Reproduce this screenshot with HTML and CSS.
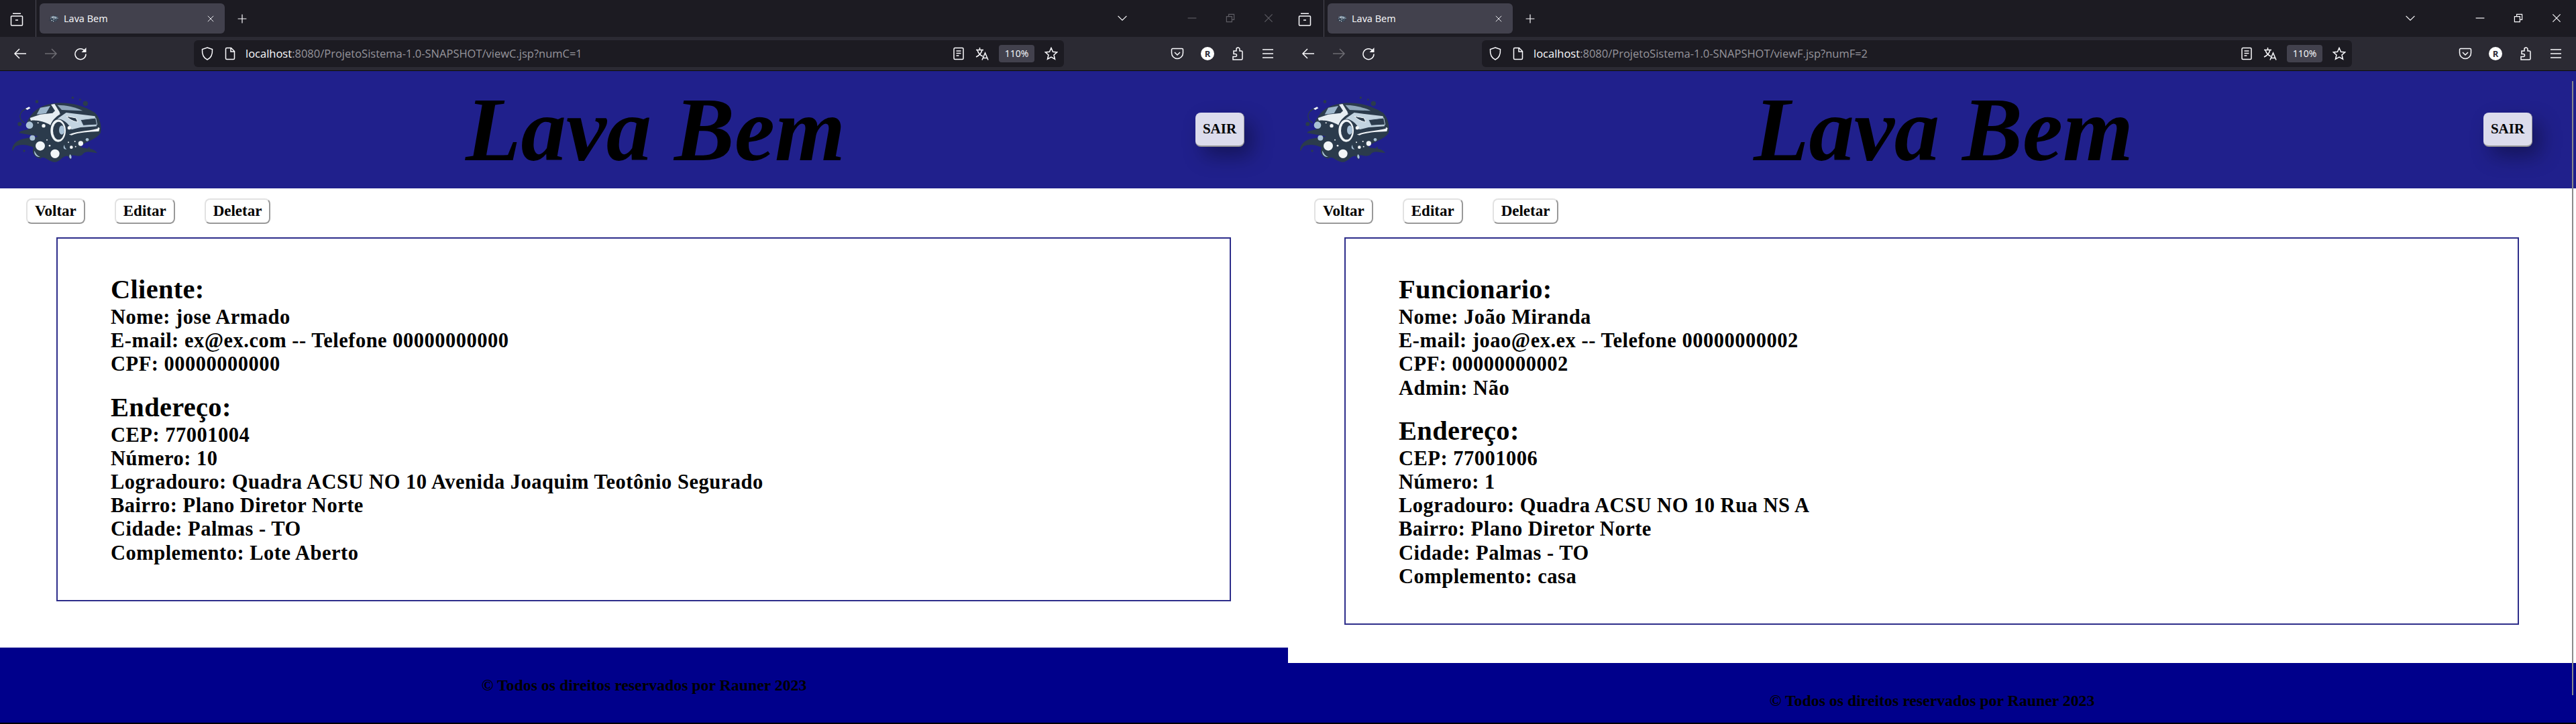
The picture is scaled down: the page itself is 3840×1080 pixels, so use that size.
FILE: index.html
```html
<!DOCTYPE html>
<html lang="pt-BR">
<head>
    <meta charset="UTF-8">
    <title>Lava Bem</title>
    <link rel="stylesheet" href="styles.css">
</head>
<body>
    <svg class="sprites" xmlns="http://www.w3.org/2000/svg">
        <symbol id="logo" viewBox="0 0 450 330">
            <path fill="#2b3b4c" d="M100 110C120 75 150 50 215 42C280 36 340 50 395 85C420 110 425 150 420 175C400 205 350 215 330 235C340 250 385 235 405 265C380 262 360 255 345 265C330 290 300 270 290 275L285 297L275 280C250 270 240 310 210 305C180 300 170 275 150 290C125 285 110 265 120 240C90 225 60 225 40 235C30 245 30 255 25 255C20 235 40 205 80 200C110 195 130 195 140 190C110 185 80 180 55 175C60 160 90 165 100 155C85 140 90 120 100 110Z"/>
            <path fill="none" stroke="#2b3b4c" stroke-width="4" d="M90 66C65 72 55 95 62 112C66 122 72 126 80 130"/>
            <path fill="#eef3f6" d="M84 66L100 58L106 64L92 72Z"/>
            <g fill="#2b3b4c">
                <circle cx="135" cy="35" r="7"/><circle cx="352" cy="43" r="11"/><circle cx="295" cy="17" r="5"/><circle cx="328" cy="26" r="4"/>
                <circle cx="58" cy="135" r="9"/><circle cx="78" cy="255" r="5"/><circle cx="368" cy="242" r="4"/>
            </g>
            <path fill="#e6edf2" d="M104 108L150 92L205 86L222 70L240 90C215 105 200 125 196 140C170 125 135 115 108 120Z"/>
            <path fill="#9db6cb" d="M150 62L195 54L176 87L134 92Z"/>
            <path fill="#e8eef3" d="M198 48L214 45L238 84L224 88Z"/>
            <path fill="#8fa6ba" d="M226 50C265 50 310 60 340 76L246 72Z"/>
            <path fill="#c3d4e1" d="M226 112L266 84L395 100L402 145L330 150L290 160C275 130 250 112 226 112Z"/>
            <path fill="#2b3b4c" stroke="#f2f6f8" stroke-width="3" d="M268 100L310 108L318 126C300 124 280 115 268 100Z"/>
            <path fill="#2b3b4c" stroke="#b4c8d8" stroke-width="3" d="M330 116L398 108L404 138L342 142Z"/>
            <path fill="#f0f4f7" d="M278 182C320 164 380 166 416 152L412 168C370 170 320 172 290 185Z"/>
            <ellipse cx="230" cy="165" rx="34" ry="50" fill="#eef3f6"/>
            <ellipse cx="232" cy="165" rx="25" ry="40" fill="#2b3b4c"/>
            <ellipse cx="246" cy="162" rx="12" ry="20" fill="#a9c1d6"/>
            <g fill="#a9c1d6">
                <circle cx="102" cy="140" r="16"/><circle cx="115" cy="197" r="12"/><circle cx="360" cy="205" r="7"/>
            </g>
            <g fill="#f2f6f8">
                <circle cx="150" cy="233" r="21"/><circle cx="216" cy="268" r="20"/><circle cx="331" cy="222" r="11"/><circle cx="289" cy="239" r="7"/>
                <circle cx="165" cy="143" r="8"/><circle cx="280" cy="152" r="8"/><circle cx="128" cy="115" r="3"/><circle cx="140" cy="130" r="3"/><circle cx="192" cy="232" r="4"/>
                <circle cx="180" cy="206" r="3"/><circle cx="276" cy="217" r="3"/><circle cx="308" cy="236" r="3"/><circle cx="305" cy="213" r="3"/><circle cx="410" cy="153" r="3"/>
            </g>
            <path fill="#a9c1d6" d="M124 254C120 272 135 284 150 282C138 278 130 268 124 254ZM258 228C250 240 255 250 268 248C262 244 258 238 258 228ZM283 270C276 280 282 292 288 290C292 284 290 276 283 270Z"/>
        </symbol>
        <symbol id="i-view" viewBox="0 0 20 20"><path d="M4 1.2H16M2.5 5H17.5A1 1 0 0 1 18.5 6V18A1 1 0 0 1 17.5 19H2.5A1 1 0 0 1 1.500 18V6A1 1 0 0 1 2.500 5ZM8 11H12"/></symbol>
        <symbol id="i-close" viewBox="0 0 20 20"><path d="M3 3L17 17M17 3L3 17"/></symbol>
        <symbol id="i-plus" viewBox="0 0 20 20"><path d="M10 2V18M2 10H18"/></symbol>
        <symbol id="i-chevron" viewBox="0 0 20 20"><path d="M2 6L10 14L18 6"/></symbol>
        <symbol id="i-min" viewBox="0 0 20 20"><path d="M2 10H18"/></symbol>
        <symbol id="i-restore" viewBox="0 0 20 20"><path d="M3 7H13V17H3ZM7 7V3H17V13H13"/></symbol>
        <symbol id="i-back" viewBox="0 0 20 20"><path d="M19 10H2M9 3L2 10L9 17"/></symbol>
        <symbol id="i-forward" viewBox="0 0 20 20"><path d="M1 10H18M11 3L18 10L11 17"/></symbol>
        <symbol id="i-reload" viewBox="0 0 20 20"><path d="M16.500 6A8 8 0 1 0 18 10.500"/><path class="solid" d="M18.500 1V8H11.500Z"/></symbol>
        <symbol id="i-shield" viewBox="0 0 20 20"><path d="M10 1L17.500 3.500C18 11 15.500 16.500 10 19C4.500 16.500 2 11 2.500 3.500Z"/></symbol>
        <symbol id="i-page" viewBox="0 0 20 20"><path d="M5 1.500H11.500L16.500 6.500V17A1.500 1.500 0 0 1 15 18.500H5A1.500 1.500 0 0 1 3.500 17V3A1.500 1.500 0 0 1 5 1.500ZM11 2V7H16"/></symbol>
        <symbol id="i-reader" viewBox="0 0 20 20"><path d="M4.500 1.500H15.500A1.500 1.500 0 0 1 17 3V17A1.500 1.500 0 0 1 15.500 18.500H4.500A1.500 1.500 0 0 1 3 17V3A1.500 1.500 0 0 1 4.500 1.500ZM6.500 6H13.500M6.500 9.500H13.500M6.500 13H10.500"/></symbol>
        <symbol id="i-translate" viewBox="0 0 20 20"><path d="M1 4.500H12M6.500 1V4.500M3 4.500C4 9 7.500 12.500 11 14M10 4.500C9 9 5.500 13 1 15M10 19.500L14.500 9L19 19.500M11.500 16.500H17.500"/></symbol>
        <symbol id="i-star" viewBox="0 0 20 20"><path d="M10 1.500L12.500 7.300L18.800 7.900L14 12L15.500 18.200L10 15L4.500 18.200L6 12L1.200 7.900L7.500 7.300Z"/></symbol>
        <symbol id="i-pocket" viewBox="0 0 20 20"><path d="M3 2.500H17A1.500 1.500 0 0 1 18.500 4V9A8.500 8.500 0 0 1 1.500 9V4A1.500 1.500 0 0 1 3 2.500ZM6 8L10 12L14 8"/></symbol>
        <symbol id="i-puzzle" viewBox="0 0 20 20"><path d="M3 19H15.500A1.500 1.500 0 0 0 17 17.500V7.500A1.500 1.500 0 0 0 15.500 6H13V3.500A2.500 2.500 0 0 0 8 3.500V6H4V10.500H6.500A2 2 0 0 1 6.500 14.500H3Z"/></symbol>
        <symbol id="i-menu" viewBox="0 0 20 20"><path d="M2 4H18M2 10H18M2 16H18"/></symbol>
    </svg>

    <div class="desktop">
        <div class="window window-back">
            <div class="tabbar">
                <svg class="icon icon-view"><use href="#i-view"/></svg>
                <div class="tab">
                    <svg class="favicon"><use href="#logo"/></svg>
                    <span class="tab-title">Lava Bem</span>
                    <svg class="icon-small"><use href="#i-close"/></svg>
                </div>
                <svg class="icon-small icon-plus"><use href="#i-plus"/></svg>
                <svg class="icon-small icon-chevron"><use href="#i-chevron"/></svg>
                <div class="caption">
                    <svg class="icon-small"><use href="#i-min"/></svg>
                    <svg class="icon-small"><use href="#i-restore"/></svg>
                    <svg class="icon-small"><use href="#i-close"/></svg>
                </div>
            </div>
            <div class="toolbar">
                <svg class="icon"><use href="#i-back"/></svg>
                <svg class="icon dim"><use href="#i-forward"/></svg>
                <svg class="icon"><use href="#i-reload"/></svg>
                <div class="urlbar">
                    <svg class="icon"><use href="#i-shield"/></svg>
                    <svg class="icon"><use href="#i-page"/></svg>
                    <div class="url"><b>localhost</b>:8080/ProjetoSistema-1.0-SNAPSHOT/viewC.jsp?numC=1</div>
                    <svg class="icon"><use href="#i-reader"/></svg>
                    <svg class="icon"><use href="#i-translate"/></svg>
                    <span class="zoom">110%</span>
                    <svg class="icon"><use href="#i-star"/></svg>
                </div>
                <div class="tools">
                    <svg class="icon"><use href="#i-pocket"/></svg>
                    <span class="avatar">R</span>
                    <svg class="icon"><use href="#i-puzzle"/></svg>
                    <svg class="icon"><use href="#i-menu"/></svg>
                </div>
            </div>
            <div class="page">
                <header class="topo">
                    <div class="logo"><svg><use href="#logo"/></svg></div>
                    <h1>Lava Bem</h1>
                    <button class="btn-sair">SAIR</button>
                </header>
                <div class="acoes">
                    <button class="btn">Voltar</button>
                    <button class="btn">Editar</button>
                    <button class="btn">Deletar</button>
                </div>
                <main class="ficha">
                    <h2>Cliente:</h2>
                    <p>Nome: jose Armado</p>
                    <p>E-mail: ex@ex.com -- Telefone 00000000000</p>
                    <p>CPF: 00000000000</p>
                    <h2 class="endereco">Endereço:</h2>
                    <p>CEP: 77001004</p>
                    <p>Número: 10</p>
                    <p>Logradouro: Quadra ACSU NO 10 Avenida Joaquim Teotônio Segurado</p>
                    <p>Bairro: Plano Diretor Norte</p>
                    <p>Cidade: Palmas - TO</p>
                    <p>Complemento: Lote Aberto</p>
                </main>
                <footer class="rodape">© Todos os direitos reservados por Rauner 2023</footer>
            </div>
        </div>

        <div class="window">
            <div class="tabbar">
                <svg class="icon icon-view"><use href="#i-view"/></svg>
                <div class="tab">
                    <svg class="favicon"><use href="#logo"/></svg>
                    <span class="tab-title">Lava Bem</span>
                    <svg class="icon-small"><use href="#i-close"/></svg>
                </div>
                <svg class="icon-small icon-plus"><use href="#i-plus"/></svg>
                <svg class="icon-small icon-chevron"><use href="#i-chevron"/></svg>
                <div class="caption">
                    <svg class="icon-small"><use href="#i-min"/></svg>
                    <svg class="icon-small"><use href="#i-restore"/></svg>
                    <svg class="icon-small"><use href="#i-close"/></svg>
                </div>
            </div>
            <div class="toolbar">
                <svg class="icon"><use href="#i-back"/></svg>
                <svg class="icon dim"><use href="#i-forward"/></svg>
                <svg class="icon"><use href="#i-reload"/></svg>
                <div class="urlbar">
                    <svg class="icon"><use href="#i-shield"/></svg>
                    <svg class="icon"><use href="#i-page"/></svg>
                    <div class="url"><b>localhost</b>:8080/ProjetoSistema-1.0-SNAPSHOT/viewF.jsp?numF=2</div>
                    <svg class="icon"><use href="#i-reader"/></svg>
                    <svg class="icon"><use href="#i-translate"/></svg>
                    <span class="zoom">110%</span>
                    <svg class="icon"><use href="#i-star"/></svg>
                </div>
                <div class="tools">
                    <svg class="icon"><use href="#i-pocket"/></svg>
                    <span class="avatar">R</span>
                    <svg class="icon"><use href="#i-puzzle"/></svg>
                    <svg class="icon"><use href="#i-menu"/></svg>
                </div>
            </div>
            <div class="page">
                <header class="topo">
                    <div class="logo"><svg><use href="#logo"/></svg></div>
                    <h1>Lava Bem</h1>
                    <button class="btn-sair">SAIR</button>
                </header>
                <div class="acoes">
                    <button class="btn">Voltar</button>
                    <button class="btn">Editar</button>
                    <button class="btn">Deletar</button>
                </div>
                <main class="ficha">
                    <h2>Funcionario:</h2>
                    <p>Nome: João Miranda</p>
                    <p>E-mail: joao@ex.ex -- Telefone 00000000002</p>
                    <p>CPF: 00000000002</p>
                    <p>Admin: Não</p>
                    <h2 class="endereco">Endereço:</h2>
                    <p>CEP: 77001006</p>
                    <p>Número: 1</p>
                    <p>Logradouro: Quadra ACSU NO 10 Rua NS A</p>
                    <p>Bairro: Plano Diretor Norte</p>
                    <p>Cidade: Palmas - TO</p>
                    <p>Complemento: casa</p>
                </main>
                <footer class="rodape">© Todos os direitos reservados por Rauner 2023</footer>
            </div>
            <div class="scrollbar"></div>
        </div>
    </div>
</body>
</html>
```

FILE: styles.css
```css
* {
    margin: 0;
    padding: 0;
    box-sizing: border-box;
}
html, body {
    height: 100%;
    overflow: hidden;
}
body {
    background: #000;
    font-family: "Liberation Serif", serif;
}
.sprites {
    display: none;
}
.desktop {
    display: flex;
}
.window {
    position: relative;
    display: flex;
    flex-direction: column;
    width: 1920px;
    height: 1078px;
    overflow: hidden;
}

/* barra de abas */
.tabbar {
    display: flex;
    align-items: center;
    flex: none;
    height: 55px;
    padding-left: 15px;
    background: #1c1b22;
    color: #fbfbfe;
}
.icon, .icon-small {
    flex: none;
    fill: none;
    stroke: currentColor;
    stroke-width: 1.5;
}
.icon {
    width: 20px;
    height: 20px;
}
.icon-small {
    width: 16px;
    height: 16px;
}
.solid {
    fill: currentColor;
    stroke: none;
}
.icon-view {
    margin-right: 24px;
    margin-top: 2px;
}
.tab {
    position: relative;
    display: flex;
    align-items: center;
    width: 276px;
    height: 45px;
    padding: 0 13px 0 13px;
    background: #42414d;
    border-radius: 6px;
}
.tab::before {
    content: "";
    position: absolute;
    left: -6px;
    top: -5px;
    width: 1px;
    height: 55px;
    background: #4a4953;
}
.favicon {
    flex: none;
    width: 16px;
    height: 12px;
    margin-right: 7px;
}
.tab-title {
    flex: 1;
    font: 14.500px "Open Sans", sans-serif;
}
.tab .icon-small {
    width: 12px;
    height: 12px;
    margin-right: 2px;
}
.icon-plus {
    margin-left: 18px;
}
.icon-chevron {
    margin-left: auto;
    margin-top: -2px;
    margin-right: 88px;
}
.caption {
    display: flex;
    gap: 41px;
    padding-right: 21px;
    margin-top: -2px;
}
.window-back .caption {
    color: #5d5c63;
}

/* barra de endereco */
.toolbar {
    display: flex;
    align-items: center;
    flex: none;
    height: 51px;
    padding: 0 20px 1px 20px;
    background: #2b2a33;
    border-bottom: 1px solid #0c0c0d;
    color: #fbfbfe;
}
.toolbar > .icon {
    margin-right: 26px;
}
.toolbar > .icon:nth-child(3) {
    margin-right: 0;
    margin-left: -2px;
}
.dim {
    color: #6d6c73;
}
.urlbar {
    display: flex;
    align-items: center;
    width: 1297px;
    height: 40px;
    margin-left: 159px;
    padding: 0 9px 0 10px;
    background: #1c1b22;
    border-radius: 6px;
}
.urlbar .icon:nth-child(2) {
    margin-left: 14px;
}
.url {
    flex: 1;
    margin-left: 13px;
    font: 16.500px "Open Sans", sans-serif;
    color: #96959c;
    white-space: nowrap;
}
.url b {
    font-weight: 400;
    color: #fbfbfe;
}
.urlbar .icon:nth-child(4) {
    margin-right: 15px;
}
.zoom {
    width: 53px;
    height: 26px;
    margin-left: 15px;
    margin-right: 15px;
    background: #42414d;
    border-radius: 4px;
    font: 14px/26px "Open Sans", sans-serif;
    text-align: center;
}
.tools {
    display: flex;
    align-items: center;
    gap: 25px;
    margin-left: auto;
}
.avatar {
    width: 20px;
    height: 20px;
    border-radius: 50%;
    background: #fff;
    color: #2b2a33;
    font: 700 13px/20px "Open Sans", sans-serif;
    text-align: center;
}

/* pagina */
.page {
    display: flex;
    flex-direction: column;
    flex: 1;
    min-height: 0;
    background: #fff;
}
.topo {
    display: flex;
    align-items: center;
    justify-content: space-between;
    flex: none;
    height: 175px;
    padding-right: 65px;
    background: #20208c;
}
.logo {
    width: 172px;
    height: 175px;
    padding: 34px 0 0 10px;
}
.logo svg {
    display: block;
    width: 150px;
    height: 110px;
}
h1 {
    font-size: 135px;
    font-style: italic;
    font-weight: 700;
    color: #000;
}
.btn-sair {
    width: 73px;
    height: 51px;
    background: #dcdcec;
    border: none;
    border-bottom: 2px solid #999;
    border-right: 1px solid #999;
    border-radius: 8px;
    box-shadow: 12px 14px 30px rgba(0, 0, 0, .35);
    font: 700 21px "Liberation Serif", serif;
    color: #000;
}
.acoes {
    display: flex;
    gap: 44px;
    flex: none;
    height: 73px;
    padding: 15px 0 0 39px;
}
.btn {
    height: 38px;
    padding: 0 11px;
    background: #fff;
    border: 2px solid #e2e2e2;
    border-right-color: #999;
    border-bottom-color: #999;
    border-radius: 8px;
    font: 700 23px "Liberation Serif", serif;
    color: #000;
}
.ficha {
    flex: none;
    margin: 0 85px 57px 84px;
    padding: 52px 78px 52px 79px;
    border: 2px solid #2d2d8a;
    color: #000;
}
.ficha h2 {
    font-size: 40.500px;
    letter-spacing: .3px;
    line-height: 48px;
}
.ficha .endereco {
    margin-top: 22px;
}
.ficha p {
    font-size: 30.500px;
    font-weight: 700;
    letter-spacing: .5px;
    line-height: 35.200px;
}
.rodape {
    flex: none;
    height: 112px;
    margin-top: auto;
    padding-top: 43px;
    background: #00008b;
    color: #000;
    font-size: 23.800px;
    font-weight: 700;
    text-align: center;
}
.scrollbar {
    position: absolute;
    top: 121px;
    right: 4px;
    bottom: 41px;
    width: 2px;
    background: #8a8a8a;
}
```
